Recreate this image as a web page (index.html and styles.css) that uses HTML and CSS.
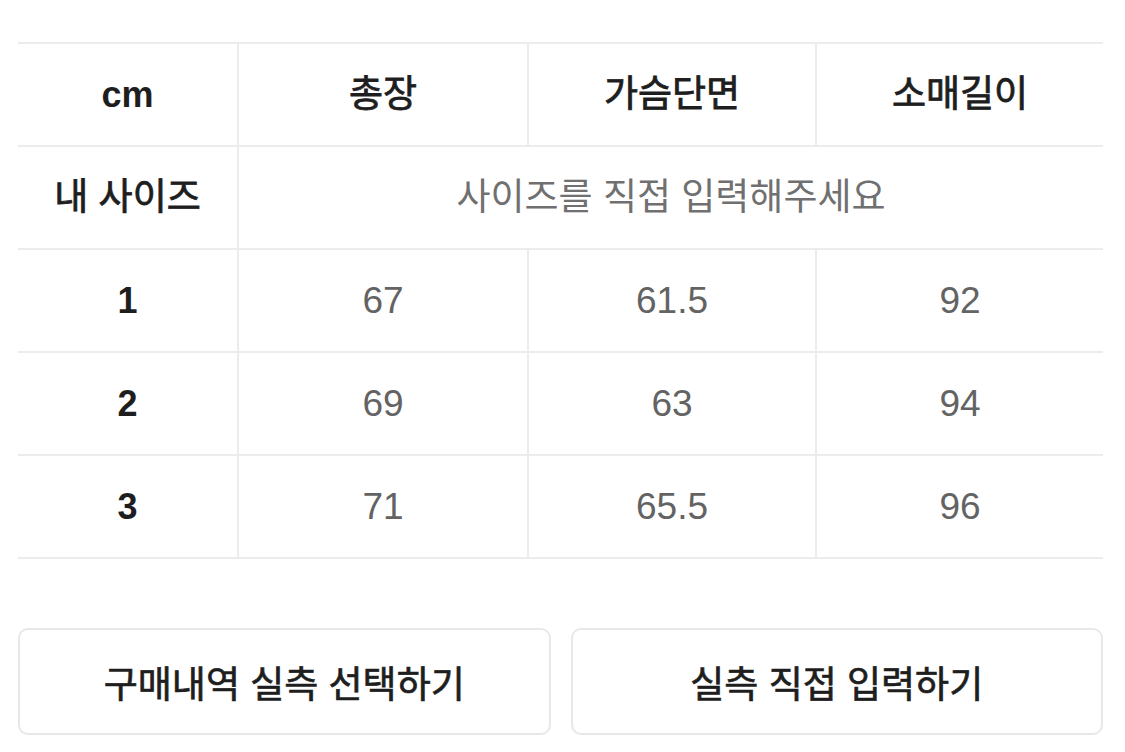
FILE: index.html
```html
<!DOCTYPE html>
<html lang="ko">
<head>
<meta charset="utf-8">
<link rel="stylesheet" href="styles.css">
</head>
<body>
<div class="page">
  <div class="size-table">
    <div class="cell head latin">cm</div>
    <div class="cell head col">총장</div>
    <div class="cell head col">가슴단면</div>
    <div class="cell head col">소매길이</div>

    <div class="cell head">내 사이즈</div>
    <div class="cell hint col span3">사이즈를 직접 입력해주세요</div>

    <div class="cell head latin">1</div>
    <div class="cell val col">67</div>
    <div class="cell val col">61.5</div>
    <div class="cell val col">92</div>

    <div class="cell head latin">2</div>
    <div class="cell val col">69</div>
    <div class="cell val col">63</div>
    <div class="cell val col">94</div>

    <div class="cell head latin">3</div>
    <div class="cell val col">71</div>
    <div class="cell val col">65.5</div>
    <div class="cell val col">96</div>
  </div>

  <div class="actions">
    <button class="btn">구매내역 실측 선택하기</button>
    <button class="btn">실측 직접 입력하기</button>
  </div>
</div>
</body>
</html>
```

FILE: styles.css
```css
html, body {
  margin: 0;
  padding: 0;
  background: #ffffff;
}

body {
  font-family: "Liberation Sans", "Noto Sans CJK KR", sans-serif;
  color: #222222;
}

.page {
  width: 1085px;
  padding: 42px 0 0 18px;
}

.size-table {
  display: grid;
  grid-template-columns: 219px 290px 288px 288px;
  grid-auto-rows: 103px;
  border-top: 2px solid #ececec;
}

.cell {
  display: flex;
  align-items: center;
  justify-content: center;
  border-bottom: 2px solid #ececec;
  font-size: 37px;
  line-height: 1;
}

.cell.col {
  border-left: 2px solid #ececec;
}

.cell.head {
  font-weight: 400;
  color: #1e1e1e;
  -webkit-text-stroke: 0.8px #1e1e1e;
}

.cell.head.latin {
  font-weight: 700;
  font-size: 36px;
  -webkit-text-stroke: 0;
}

.cell.span3 {
  grid-column: span 3;
}

.cell.hint {
  color: #707070;
  font-size: 37px;
}

.cell.val {
  color: #636363;
  font-size: 37px;
}

.actions {
  display: flex;
  gap: 20px;
  margin-top: 69px;
}

.btn {
  flex: 1;
  height: 107px;
  background: #ffffff;
  border: 2px solid #e8e8e8;
  border-radius: 10px;
  font-family: "Liberation Sans", "Noto Sans CJK KR", sans-serif;
  font-size: 37px;
  color: #1e1e1e;
  -webkit-text-stroke: 0.7px #1e1e1e;
  padding: 0;
}
```
